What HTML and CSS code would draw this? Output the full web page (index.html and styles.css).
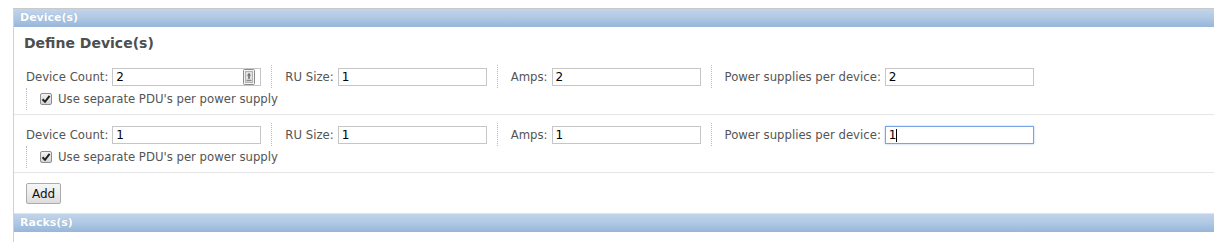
FILE: index.html
```html
<!DOCTYPE html>
<html lang="en">
<head>
<meta charset="utf-8">
<title>Device(s)</title>
<link rel="stylesheet" href="styles.css">
</head>
<body>
<div class="panel">
  <section class="section">
    <div class="bar">Device(s)</div>
    <div class="body">
      <h2 class="title">Define Device(s)</h2>

      <div class="device-row">
        <div class="fields">
          <div class="field first">
            <label>Device Count:</label>
            <span class="input-wrap">
              <input class="text-input" type="text" value="2">
              <svg class="input-icon" width="12" height="16" viewBox="0 0 12 16">
                <rect x="0.5" y="0.5" width="11" height="15" rx="1" fill="#f3f3f3" stroke="#8c8c8c"/>
                <rect x="2.5" y="2.5" width="7" height="11" fill="#e2e2e2" stroke="#b3b3b3"/>
                <path d="M6 3.8 L4 6.8 H8 Z" fill="#6a6a6a"/>
                <rect x="5.2" y="6.8" width="1.6" height="3" fill="#6a6a6a"/>
                <rect x="3.5" y="10.8" width="5" height="1.4" fill="#8a8a8a"/>
              </svg>
            </span>
          </div>
          <div class="field">
            <label>RU Size:</label>
            <span class="input-wrap"><input class="text-input" type="text" value="1"></span>
          </div>
          <div class="field">
            <label>Amps:</label>
            <span class="input-wrap"><input class="text-input" type="text" value="2"></span>
          </div>
          <div class="field">
            <label>Power supplies per device:</label>
            <span class="input-wrap"><input class="text-input" type="text" value="2"></span>
          </div>
        </div>
        <div class="check-row">
          <span class="checkbox"><svg width="10" height="10" viewBox="0 0 10 10"><path d="M1.5 5.2 L4 7.8 L8.6 1.8" fill="none" stroke="#222" stroke-width="2"/></svg></span>
          <span>Use separate PDU's per power supply</span>
        </div>
      </div>

      <div class="device-row">
        <div class="fields">
          <div class="field first">
            <label>Device Count:</label>
            <span class="input-wrap"><input class="text-input" type="text" value="1"></span>
          </div>
          <div class="field">
            <label>RU Size:</label>
            <span class="input-wrap"><input class="text-input" type="text" value="1"></span>
          </div>
          <div class="field">
            <label>Amps:</label>
            <span class="input-wrap"><input class="text-input" type="text" value="1"></span>
          </div>
          <div class="field">
            <label>Power supplies per device:</label>
            <span class="input-wrap">
              <input class="text-input focused" type="text" value="1">
              <span class="caret"></span>
            </span>
          </div>
        </div>
        <div class="check-row">
          <span class="checkbox"><svg width="10" height="10" viewBox="0 0 10 10"><path d="M1.5 5.2 L4 7.8 L8.6 1.8" fill="none" stroke="#222" stroke-width="2"/></svg></span>
          <span>Use separate PDU's per power supply</span>
        </div>
      </div>

      <div class="actions">
        <button class="btn" type="button">Add</button>
      </div>
    </div>
  </section>
  <section class="section racks">
    <div class="bar">Racks(s)</div>
    <div class="body empty"></div>
  </section>
</div>
</body>
</html>
```

FILE: styles.css
```css
html, body {
  margin: 0;
  padding: 0;
  background: #ffffff;
}

body {
  font-family: "DejaVu Sans", Verdana, sans-serif;
  font-size: 11.7px;
  color: #555555;
  overflow: hidden;
}

.panel {
  margin: 8px 0 0 13px;
  border-top: 1px solid #c9c9c9;
  border-left: 1px solid #d2d2d2;
}

.bar {
  height: 18px;
  line-height: 18px;
  padding-left: 6px;
  font-size: 11px;
  font-weight: bold;
  color: #ffffff;
  background: linear-gradient(to bottom, #c1d5ea 0%, #afc8e4 50%, #97b6da 100%);
  text-shadow: 0 0 1px rgba(90, 120, 160, 0.35);
}

.racks .bar {
  border-top: 1px solid #e3e3e3;
}

.title {
  margin: 0 0 5px 0;
  padding: 7px 10px 0;
  font-size: 14px;
  line-height: 18px;
  font-weight: bold;
  color: #4e4e4e;
}

.device-row {
  padding: 8px 0 4px 12px;
  border-bottom: 1px solid #e6e6e6;
}

.fields {
  display: flex;
  height: 23px;
}

.field {
  display: flex;
  align-items: center;
  gap: 4px;
  padding: 0 10px 0 13px;
  border-left: 1px dotted #b8b8b8;
}

.field.first {
  border-left: 0;
  padding-left: 0;
}

.field label {
  white-space: nowrap;
}

.input-wrap {
  position: relative;
  display: block;
  height: 18px;
}

.text-input {
  box-sizing: border-box;
  width: 149px;
  height: 18px;
  margin: 0;
  padding: 1px 3px 0;
  border: 1px solid #c6c6c6;
  font-family: "DejaVu Sans", Verdana, sans-serif;
  font-size: 12px;
  color: #000000;
  background: #ffffff;
  outline: none;
}

.text-input.focused {
  border-color: #7aa5e4;
  box-shadow: 0 0 2px rgba(100, 150, 230, 0.55);
}

.input-icon {
  position: absolute;
  right: 6px;
  top: 1px;
}

.caret {
  position: absolute;
  left: 11px;
  top: 3px;
  width: 1px;
  height: 13px;
  background: #000000;
}

.check-row {
  display: flex;
  align-items: center;
  gap: 6px;
  height: 22px;
  padding-left: 13px;
  border-left: 1px dotted #b8b8b8;
}

.checkbox {
  box-sizing: border-box;
  display: flex;
  align-items: center;
  justify-content: center;
  width: 12px;
  height: 12px;
  border: 1px solid #8e8e8e;
  border-radius: 2px;
  background: linear-gradient(to bottom, #f2f2f2, #d6d6d6);
}

.actions {
  padding: 10px 12px 9px;
}

.btn {
  box-sizing: border-box;
  height: 21px;
  padding: 0 5px;
  border: 1px solid #acacac;
  border-radius: 2px;
  background: linear-gradient(to bottom, #f7f7f7 0%, #ebebeb 50%, #dddddd 100%);
  font-family: "DejaVu Sans", Verdana, sans-serif;
  font-size: 12px;
  color: #111111;
}

.body.empty {
  height: 12px;
}
```
